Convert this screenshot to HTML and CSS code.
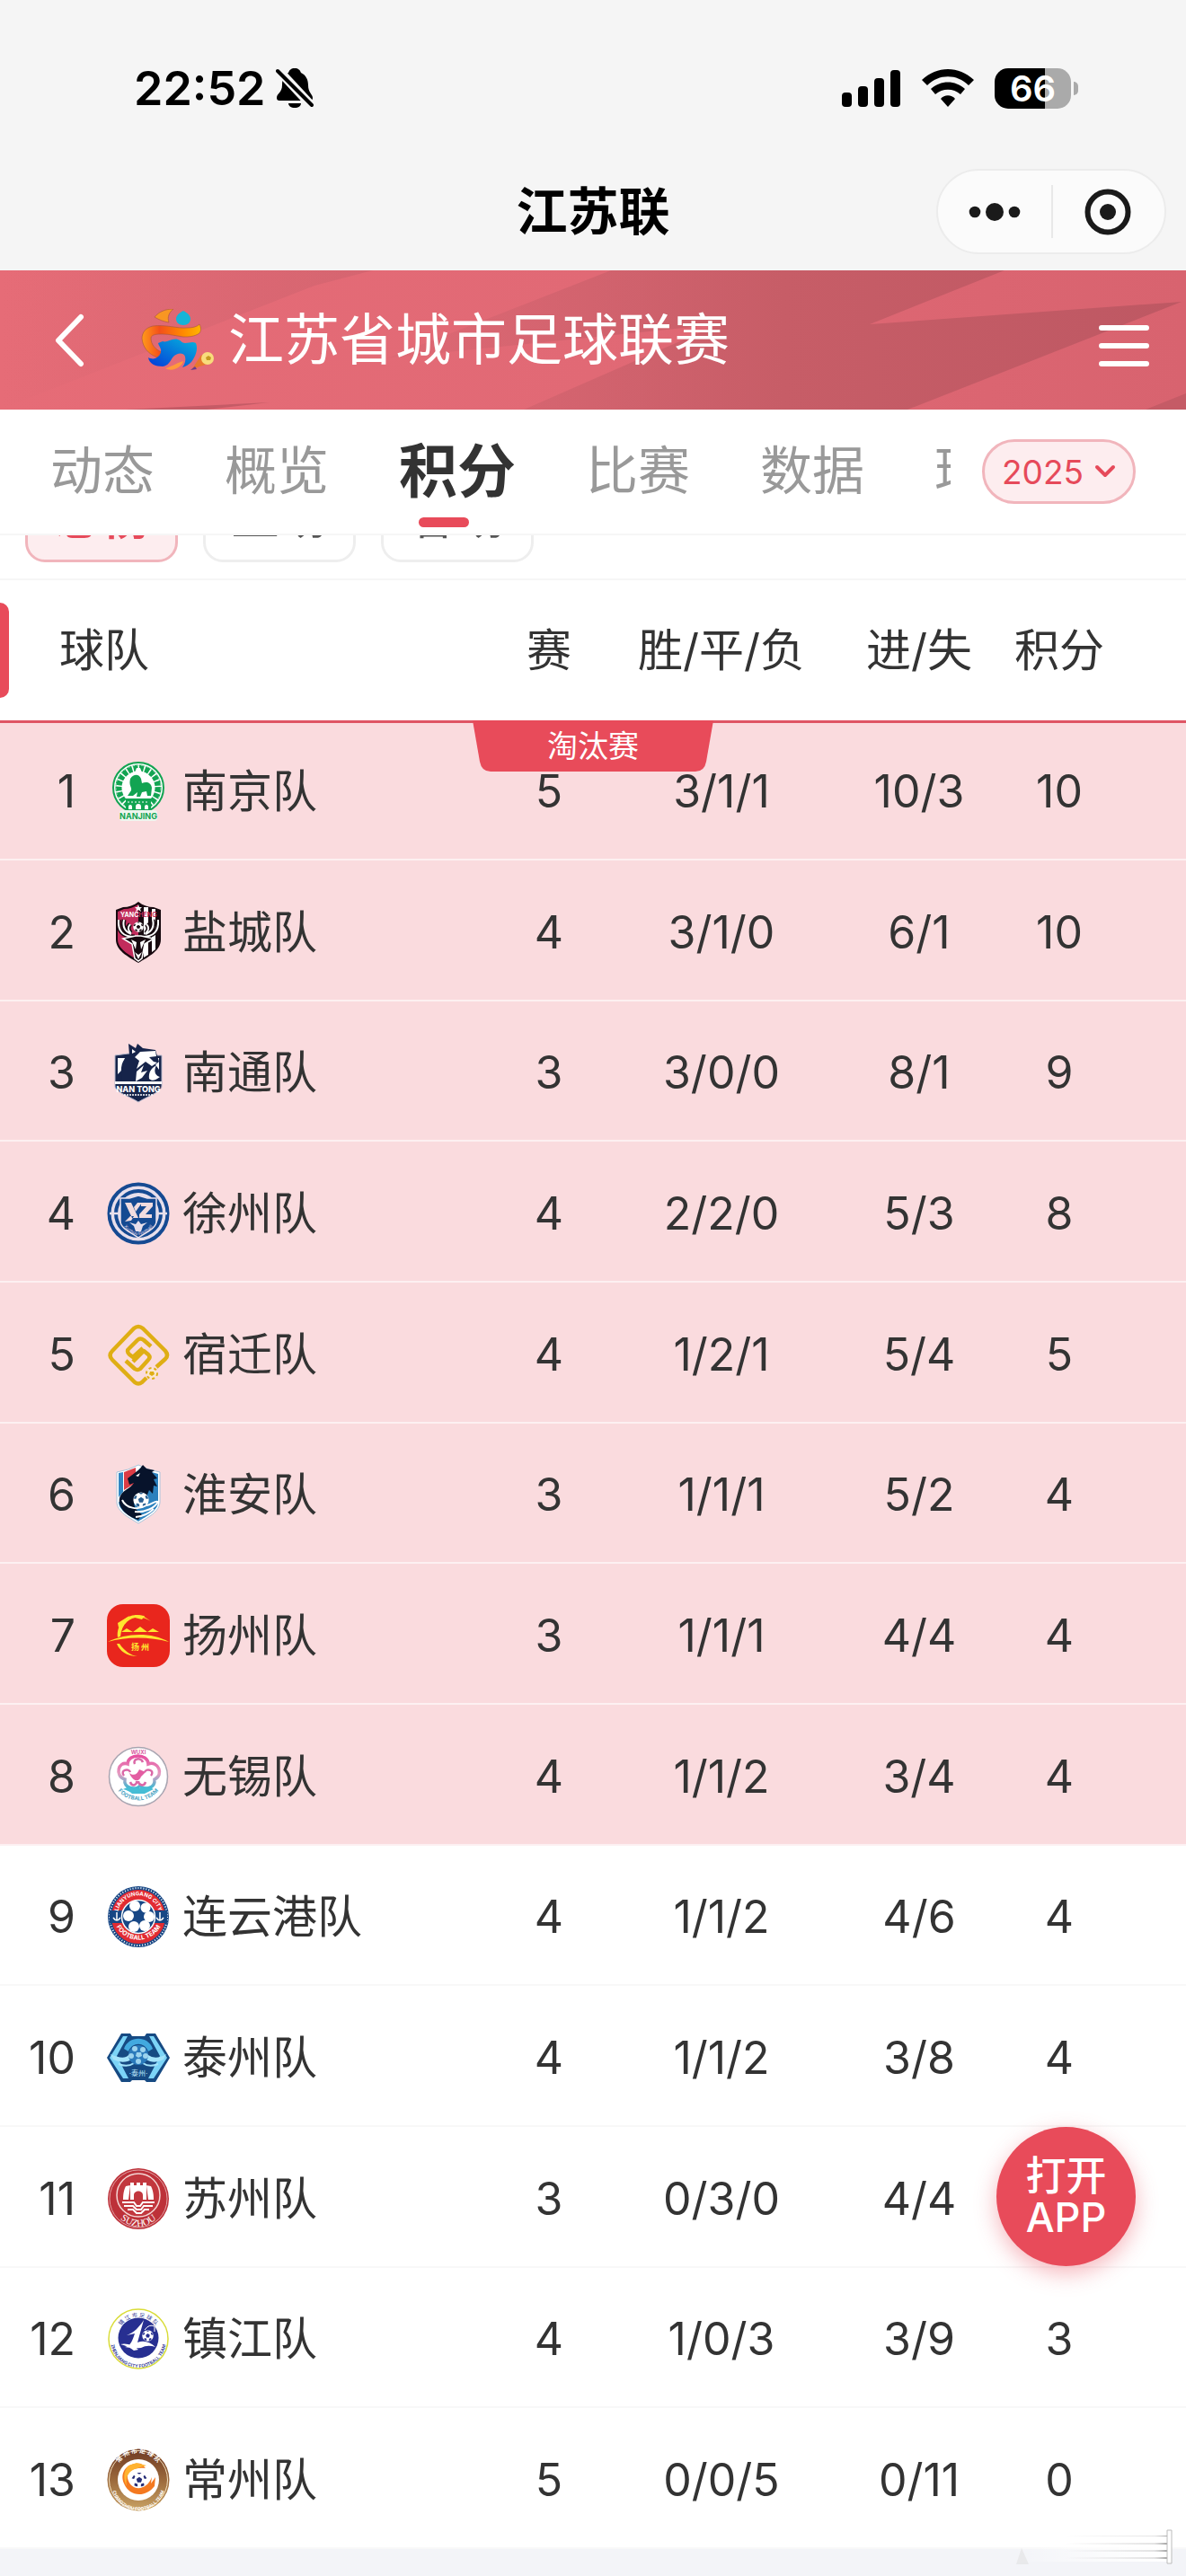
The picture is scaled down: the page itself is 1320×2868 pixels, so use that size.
FILE: index.html
```html
<!DOCTYPE html>
<html lang="zh-CN">
<head>
<meta charset="utf-8">
<meta name="viewport" content="width=device-width, initial-scale=1">
<title>江苏联</title>
<link rel="stylesheet" href="styles.css">
</head>
<body>
<svg class="defs" width="0" height="0" aria-hidden="true">
  <symbol id="ball" viewBox="0 0 24 24">
    <circle cx="12" cy="12" r="11.500" fill="#fff"/>
    <path d="M12 7.500l4.300 3.100-1.600 5h-5.400l-1.600-5zM8.500 1.200l3.500 2.300 3.500-2.300zM.8 9.500l3.400 1.200 1.800-4.200-2-1.500zM23.200 9.500l-3.400 1.200L18 6.500l2-1.500zM4.600 20.400l.6-3.900 4.200 1.500.2 3.500-2 .2zM19.400 20.400l-.6-3.900-4.200 1.500-.2 3.500 2 .2z" fill="currentColor"/>
  </symbol>
</svg>

<div class="status">
  <div class="status-time">
    <span>22:52</span>
    <svg width="42" height="46" viewBox="0 0 42 46" aria-label="静音">
      <path d="M21 1c4 0 6 2 7 5 6 3 8 8 8 14 0 8 5 10 5 14 0 2-1 3-3 3H4c-2 0-3-1-3-3 0-5 6-6 6-14 0-7 2-12 7-14 1-3 3-5 7-5z"/>
      <path d="M14 40h14c0 3-3 5-7 5s-7-2-7-5z"/>
      <path d="M0 0l41 44" stroke="#f5f5f5" stroke-width="10"/>
      <path d="M2 4l38 38" stroke="#000" stroke-width="4" stroke-linecap="round"/>
    </svg>
  </div>
  <div class="status-icons">
    <svg width="66" height="42" viewBox="0 0 66 42" aria-label="信号">
      <rect x="0" y="26" width="11" height="16" rx="4"/><rect x="18" y="19" width="11" height="23" rx="4"/><rect x="36" y="10" width="11" height="32" rx="4"/><rect x="54" y="1" width="11" height="41" rx="4"/>
    </svg>
    <svg width="58" height="42" viewBox="0 0 58 42" aria-label="无线网络">
      <path d="M29 42l-8-9c4-5 12-5 16 0zM10 22c11-10 27-10 38 0l-5 6c-8-7-20-7-28 0zM0 12C17-4 41-4 58 12l-6 6C39 5 19 5 6 18z"/>
    </svg>
    <div class="battery"><span>66</span></div>
  </div>
</div>

<div class="nav">
  <h1>江苏联</h1>
  <div class="capsule">
    <button type="button" aria-label="更多"><svg width="58" height="22" viewBox="0 0 58 22"><circle cx="7" cy="11" r="6.300"/><circle cx="29" cy="11" r="10"/><circle cx="51" cy="11" r="6.300"/></svg></button>
    <button type="button" aria-label="关闭"><svg width="54" height="54" viewBox="0 0 54 54"><circle cx="27" cy="27" r="22.500" fill="none" stroke="#1a1a1a" stroke-width="6"/><circle cx="27" cy="27" r="9"/></svg></button>
  </div>
</div>

<header class="banner">
  <svg class="facets" viewBox="0 0 1320 155" preserveAspectRatio="none" aria-hidden="true">
    <defs>
      <linearGradient id="f1"><stop offset="0" stop-color="#c8606b" stop-opacity="0"/><stop offset="1" stop-color="#c8606b" stop-opacity=".5"/></linearGradient>
      <linearGradient id="f2"><stop offset="0" stop-color="#c8606b" stop-opacity=".15"/><stop offset=".5" stop-color="#c75d67"/><stop offset="1" stop-color="#be5863"/></linearGradient>
    </defs>
    <path d="M0 0H415L350 17 0 155z" fill="url(#f1)"/>
    <path d="M680 0H1118L968 60 1315 35 1010 155H583L800 60 430 98z" fill="url(#f2)"/>
    <path d="M230 155L300 147 140 155zM1275 155l45-18v18z" fill="#c55b66"/>
  </svg>
  <a class="back" href="#" aria-label="返回"><svg width="34" height="60" viewBox="0 0 34 60"><path d="M30 4L5 30l25 26" fill="none" stroke="#fff" stroke-width="6" stroke-linecap="round" stroke-linejoin="round"/></svg></a>
  <svg class="mascot" width="84" height="70" viewBox="0 0 84 70" aria-hidden="true">
    <defs>
      <linearGradient id="m1"><stop offset="0" stop-color="#ff9a1a"/><stop offset=".3" stop-color="#f4501a"/><stop offset=".7" stop-color="#ff8a00"/><stop offset="1" stop-color="#ffb600"/></linearGradient>
      <linearGradient id="m2" x1="1" y1="0" x2="0" y2="1"><stop offset="0" stop-color="#06b4dc"/><stop offset="1" stop-color="#0538d8"/></linearGradient>
    </defs>
    <path d="M16 9C21 3 28 0 37 0c-5 4-7 9-5 15-6-1-11-3-16-6z" fill="#f99622" stroke="#a5553c" stroke-width=".6"/>
    <path d="M48 2c4 2 8 5 8 9s-3 7-8 7-8-3-8-7 4-7 8-9z" fill="#14b4d8"/>
    <path d="M66 17c2 4 2 7 0 10-6 4-12 4-18 4-8-1-15-3-23-3-6 0-12 0-13 4 0 8 5 13 12 16l-5 6C9 50 3 43 2 33c0-7 4-12 12-14 15-2 27 3 38 2 6 0 11-1 14-4z" fill="url(#m1)" stroke="#a5553c" stroke-width=".6"/>
    <path d="M25 36c5 2 10-4 17-2 4 1 4 4 8 4 5 0 8-2 12 0 3 7-1 16-5 21-3 3-6 5-10 6 3-4 4-8 3-12-2-5-9-4-13 0-4 5-5 10-12 11-8 0-15-3-16-10 7 4 13-1 14-6 1-4-2-6-3-10z" fill="url(#m2)"/>
    <path d="M28 66c6-1 12-6 20-8-1 6-12 13-20 8z" fill="#ff9a3c"/>
    <path d="M57 68l11-17 12 9-14 4z" fill="#e8782c"/><path d="M56 68l5-4 2 3z" fill="#6a3a8c"/>
    <circle cx="75" cy="55" r="7" fill="#f8dc7c"/><path d="M73 54l3-2 3 2-1 3h-4z" fill="#c69a22"/>
  </svg>
  <h2>江苏省城市足球联赛</h2>
  <button class="menu" type="button" aria-label="菜单"><svg width="56" height="48" viewBox="0 0 56 48"><path d="M3 4h50M3 24h50M3 44h50" stroke="#fff" stroke-width="6" stroke-linecap="round"/></svg></button>
</header>

<div class="tabbar">
  <nav class="tabs">
    <a href="#">动态</a><a href="#">概览</a><a href="#" class="active" aria-current="page">积分</a><a href="#">比赛</a><a href="#">数据</a><a href="#">球队</a>
  </nav>
  <button class="season" type="button">2025<svg width="24" height="16" viewBox="0 0 24 16"><path d="M3 3l9 9 9-9" fill="none" stroke="#e64a5a" stroke-width="4" stroke-linecap="round" stroke-linejoin="round"/></svg></button>
</div>

<div class="filters">
  <button class="chip selected" type="button">总榜</button>
  <button class="chip" type="button">主场</button>
  <button class="chip" type="button">客场</button>
</div>

<main class="standings">
  <div class="ribbon"><svg viewBox="0 0 268 57" preserveAspectRatio="none" aria-hidden="true"><path d="M0 0H268L260 46Q258 57 248 57H20Q10 57 8 46z" fill="#e84b5a"/></svg><span>淘汰赛</span></div>
  <table>
    <colgroup><col class="c-rank"><col><col class="c-played"><col class="c-record"><col class="c-goals"><col class="c-points"></colgroup>
    <thead>
      <tr><th colspan="2" class="th-team">球队</th><th>赛</th><th>胜/平/负</th><th>进/失</th><th class="pts">积分</th></tr>
    </thead>
    <tbody>
      <tr class="q"><td class="rank">1</td><td><div class="team">
        <svg class="crest" viewBox="0 0 72 72" aria-hidden="true">
          <ellipse cx="36" cy="32" rx="28" ry="28" fill="#fff" stroke="#12a452" stroke-width="2"/>
          <circle cx="36" cy="32" r="22" fill="none" stroke="#12a452" stroke-width="7" stroke-dasharray="5 1.500"/>
          <circle cx="36" cy="32" r="25" fill="none" stroke="#8fd6ae" stroke-width="1" stroke-dasharray="3 2"/>
          <path d="M34 10h4l2 5h-8z" fill="#fff"/>
          <circle cx="36" cy="31" r="17" fill="#fff"/>
          <path d="M27 22c4-6 10-5 12 0l1 5c5-2 10-1 11 5l-1 9h-4l-1-5-5 1-2 5h-4l1-5-5 4h-6l4-6c1-4-3-5-1-13z" fill="#12a452"/>
          <path d="M22 44h28v13H22z" fill="#12a452"/><path d="M25 56v-3a2 2 0 0 1 4 0v3zm8 0v-3a3 3 0 0 1 6 0v3zm10 0v-3a2 2 0 0 1 4 0v3z" fill="#fff"/>
          <path d="M24 48h24" stroke="#fff" stroke-dasharray="2 2"/>
          <rect x="15" y="57" width="42" height="12" rx="3" fill="#eef5ee"/>
          <text x="36" y="67" font-size="9" font-weight="700" text-anchor="middle" fill="#12a452">NANJING</text>
        </svg>南京队</div></td><td>5</td><td>3/1/1</td><td>10/3</td><td class="pts">10</td></tr>

      <tr class="q"><td class="rank">2</td><td><div class="team">
        <svg class="crest" viewBox="0 0 72 72" aria-hidden="true">
          <path d="M11 11l8-3c6 0 12-2 17-6 5 4 11 6 17 6l8 3v33c0 12-13 19-25 26C24 63 11 56 11 44z" fill="#17090f"/>
          <path d="M13 13l7-3c6 0 11-2 16-5v62C25 61 13 54 13 44z" fill="#c22c5c"/>
          <path d="M42 8h5v53l-5 3zM51 10h4v45l-4 3z" fill="#fff"/>
          <path d="M36 5l1 3h3l-2 2 1 3-3-2-3 2 1-3-2-2h3z" fill="#fff"/>
          <text x="16" y="19" font-size="7" font-weight="700" fill="#fff">YANC<tspan fill="#c22c5c">HENG</tspan></text>
          <path d="M14 22c-1 13 5 19 18 19M20 22c-2 8 1 13 8 16M27 27c-3 3-3 7 1 10M58 22c1 13-5 19-18 19M52 22c2 8-1 13-8 16M45 27c3 3 3 7-1 10" fill="none" stroke="#17090f" stroke-width="5"/>
          <path d="M14 22c-1 13 5 19 18 19M20 22c-2 8 1 13 8 16M27 27c-3 3-3 7 1 10M58 22c1 13-5 19-18 19M52 22c2 8-1 13-8 16M45 27c3 3 3 7-1 10" fill="none" stroke="#fff" stroke-width="2"/>
          <use href="#ball" x="30" y="24" width="12" height="12" color="#17090f"/>
          <path d="M19 43l14-3h6l14 3-10 6-3 16-4 3-4-3-3-16z" fill="#17090f" stroke="#fff" stroke-width="1.500"/>
          <path d="M28 44l6 3-1 8zM44 44l-6 3 1 8zM32 58l4 3 4-3-4 8z" fill="#fff"/>
        </svg>盐城队</div></td><td>4</td><td>3/1/0</td><td>6/1</td><td class="pts">10</td></tr>

      <tr class="q"><td class="rank">3</td><td><div class="team">
        <svg class="crest" viewBox="0 0 72 72" aria-hidden="true">
          <path d="M10 17l15-2 22 2 15 0v34c0 7-17 12-26 18C27 63 10 58 10 51z" fill="#16244a" stroke="#b5b8cc"/>
          <path d="M13 20h8l-4 14-4 4zM59 20h-9l9 13z" fill="#fff"/>
          <path d="M18 45C15 29 18 21 26 17L25 4l8 5 2-5 6 5 14 2 4 13-8 7-8-4c-7 3-7 9-4 18z" fill="#16244a"/>
          <path d="M29 10l4 3-4 2zM38 13l17-1 1 6-8 1 5 5 4 1-6 4-7-5-10 8 3-9-5-4z" fill="#fff"/>
          <path d="M34 35l8-7-3 8 7-2-6 8-7 4zM48 43c-1-8 3-12 8-15-4 8 0 12 4 13-5 4-9 5-12 2z" fill="#fff"/>
          <path d="M10 46h52v3H10z" fill="#fff"/>
          <text x="36" y="58" font-size="9" font-weight="800" text-anchor="middle" fill="#fff">NAN TONG</text>
          <path d="M20 61h32" stroke="#fff" stroke-width="1.500" stroke-dasharray="2 1"/>
        </svg>南通队</div></td><td>3</td><td>3/0/0</td><td>8/1</td><td class="pts">9</td></tr>

      <tr class="q"><td class="rank">4</td><td><div class="team">
        <svg class="crest" viewBox="0 0 72 72" aria-hidden="true">
          <circle cx="36" cy="36" r="32.500" fill="#e8dfeb" stroke="#154a92" stroke-width="4"/>
          <circle cx="36" cy="36" r="25" fill="none" stroke="#154a92" stroke-width="4"/>
          <path d="M4 36h14M54 36h14" stroke="#e8dfeb" stroke-width="2.500"/>
          <path d="M16 19h10l10-3 10 3h10v26c0 7-11 12-20 18-9-6-20-11-20-18z" fill="#154a92" stroke="#e8dfeb" stroke-width="1.500"/>
          <path d="M21 24h7l8 17h-7zM31 29l4-5h5l-7 10zM27 39l-6 6 7-1 3-5zM39 24h13v4l-8 9h7v4H37v-4l8-9h-6z" fill="#f1dcdf"/>
          <path d="M36 44l3 4 7-2-5 4-2 6h-6l-2-6-5-4 7 2z" fill="#e8dfeb"/>
          <path id="xzp" d="M15 44Q36 76 57 44" fill="none"/>
          <text font-size="5" fill="#e8dfeb"><textPath href="#xzp" startOffset="50%" text-anchor="middle">Xuzhou Football</textPath></text>
        </svg>徐州队</div></td><td>4</td><td>2/2/0</td><td>5/3</td><td class="pts">8</td></tr>

      <tr class="q"><td class="rank">5</td><td><div class="team">
        <svg class="crest" viewBox="0 0 72 72" aria-hidden="true">
          <g fill="none" stroke="#dfae14" stroke-width="4.500" stroke-linejoin="round">
            <path d="M45 62l-5 5q-4 3-8 0L7 42q-5-5 0-10L31 7q5-4 10 0l25 25q4 5 0 9L56 50"/>
            <path d="M50 27l-8-7q-4-3-7 0L26 29q-4 3 0 7l4 3 11-10M22 43l10 9q3 2 6 0l9-10q3-3 0-6l-5-4-12 12"/>
          </g>
          <circle cx="51" cy="57" r="6" fill="#fbe7cf" stroke="#dfae14" stroke-width="2" stroke-dasharray="3 3"/><path d="M49 55h4l1 3-3 2-3-2z" fill="#dfae14"/>
        </svg>宿迁队</div></td><td>4</td><td>1/2/1</td><td>5/4</td><td class="pts">5</td></tr>

      <tr class="q"><td class="rank">6</td><td><div class="team">
        <svg class="crest" viewBox="0 0 72 72" aria-hidden="true">
          <path d="M12 11q13-2 24-8 11 6 24 8v33c0 11-14 18-24 24C26 62 12 55 12 44z" fill="#fff" stroke="#a9c4da"/>
          <path d="M14 12l5-1v22l-5 6z" fill="#3287c3"/><path d="M20 11l13-5v17L20 31z" fill="#dc3b45"/>
          <path d="M37 7l21 6v31c0 10-13 16-22 22-9-6-22-12-22-22l12 4z" fill="#2a80bd"/>
          <path d="M24 18L37 8l4-5 4 4 9 2-3 2 6 7-4 1 4 8-4-1-1 9-4-4-4 10-8-5c-6 5-8 14 4 22l-4 6C22 60 13 50 15 40c2-9 13-11 16-17l-5 2z" fill="#07132b"/>
          <path d="M33 15l5-3-2 4z" fill="#fff"/>
          <use href="#ball" x="30" y="33" width="18" height="18" color="#2a5f91"/>
          <path d="M18 42c4 9 17 12 27 6 6-1 10-6 13-4-4 7-14 12-26 11M33 61c10-1 15-4 20-9" fill="none" stroke="#fff" stroke-width="2"/>
        </svg>淮安队</div></td><td>3</td><td>1/1/1</td><td>5/2</td><td class="pts">4</td></tr>

      <tr class="q"><td class="rank">7</td><td><div class="team">
        <svg class="crest" viewBox="0 0 72 72" aria-hidden="true">
          <rect x="1" y="1" width="70" height="70" rx="18" fill="#e9261d"/>
          <path d="M13 38C11 22 25 9 41 14l9 6C36 11 18 16 16 37zM15 45c6 9 13 13 20 14-12 0-20-6-23-14z" fill="#ffe52f"/>
          <path d="M13 22l13-8-4 8-8 5zM32 13l11 1-3 4-8-2z" fill="#ffe52f"/>
          <path d="M2 43C23 33 50 32 70 43 49 37 22 37 2 43z" fill="#ffe52f"/>
          <path d="M17 32l6-4 7 4zM30 32l8-6 8 6zM46 32l6-4 7 4z" fill="#ffe52f"/>
          <text x="38" y="52" font-size="9" font-weight="700" text-anchor="middle" fill="#ffe52f">扬 州</text>
        </svg>扬州队</div></td><td>3</td><td>1/1/1</td><td>4/4</td><td class="pts">4</td></tr>

      <tr class="q"><td class="rank">8</td><td><div class="team">
        <svg class="crest" viewBox="0 0 72 72" aria-hidden="true">
          <defs><linearGradient id="wx" x1="0" y1="0" x2="0" y2="1"><stop offset="0" stop-color="#e64fa0"/><stop offset=".55" stop-color="#e69bc0"/><stop offset="1" stop-color="#3ab9d3"/></linearGradient></defs>
          <circle cx="36" cy="36" r="32.500" fill="#fff" stroke="#a8a5b1" stroke-width="1.500"/>
          <path d="M24 22c0-12 23-12 23 0 11-4 18 12 7 17 1 10-11 13-16 7-5 6-19 3-17-7-12-4-7-21 3-17z" fill="none" stroke="url(#wx)" stroke-width="3.500"/>
          <path d="M32 22c-3-6 7-8 9-2M20 35c-5-6 5-9 7-4M50 35c5-6-5-9-7-4M27 42c2 6 8 3 7-1M44 42c-2 6-8 3-8-1" fill="none" stroke="#db67a7" stroke-width="2.500"/>
          <path d="M26 32c5 4 9 1 11-4l7 3-5 5c-3 8-10 4-13-4z" fill="#e35da2"/>
          <path d="M19 50q8-5 17-1 9-4 17 1-8 4-10 5H29q-3-3-10-5z" fill="#45bdd5"/>
          <path id="wxb" d="M9 44a29 29 0 0 0 54 0" fill="none"/>
          <text x="36" y="11" font-size="6" font-weight="700" text-anchor="middle" fill="#d95c9f">WUXI</text>
          <text font-size="6" font-weight="700" fill="#4aa3c3"><textPath href="#wxb" startOffset="50%" text-anchor="middle">FOOTBALL TEAM</textPath></text>
        </svg>无锡队</div></td><td>4</td><td>1/1/2</td><td>3/4</td><td class="pts">4</td></tr>

      <tr><td class="rank">9</td><td><div class="team">
        <svg class="crest" viewBox="0 0 72 72" aria-hidden="true">
          <circle cx="36" cy="36" r="34" fill="#174785"/><circle cx="36" cy="36" r="32" fill="none" stroke="#fff" stroke-width="2" stroke-dasharray="1 2"/>
          <circle cx="36" cy="36" r="24.500" fill="none" stroke="#e22b32" stroke-width="11"/>
          <path d="M4 29h15v14H4zM53 29h15v14H53z" fill="#174785"/>
          <circle cx="36" cy="36" r="18.500" fill="#174785" stroke="#fff" stroke-width="1.500"/>
          <g fill="#fff"><circle cx="32" cy="24" r="6"/><circle cx="44" cy="26" r="5.500"/><circle cx="25" cy="35" r="6"/><circle cx="31" cy="47" r="6"/><circle cx="43" cy="46" r="6"/><circle cx="48" cy="36" r="6"/></g>
          <path d="M12 31v9M8 37q4 6 8 0M60 31v9M56 37q4 6 8 0" fill="none" stroke="#fff" stroke-width="1.500"/>
          <path id="lyt" d="M13 31a23.500 23.500 0 0 1 46 0" fill="none"/><path id="lyb" d="M10 44a28 28 0 0 0 52 0" fill="none"/>
          <text font-size="6" font-weight="700" fill="#fff"><textPath href="#lyt" startOffset="50%" text-anchor="middle">LIANYUNGANG CITY</textPath></text>
          <text font-size="7" font-weight="700" fill="#fff"><textPath href="#lyb" startOffset="50%" text-anchor="middle">FOOTBALL TEAM</textPath></text>
        </svg>连云港队</div></td><td>4</td><td>1/1/2</td><td>4/6</td><td class="pts">4</td></tr>

      <tr><td class="rank">10</td><td><div class="team">
        <svg class="crest" viewBox="0 0 72 72" aria-hidden="true">
          <path d="M1 36L17 9h10l2 3h14l2-3h10l16 27-16 27H45l-2-2H29l-2 2H17z" fill="#164a83"/>
          <path d="M4 36L19 12h5L12 34l13 25h-6zM68 36L53 12h-5l12 22-13 25h6z" fill="#7cd4f7"/>
          <path d="M20 26c5-15 27-15 32 0l-5 3c-4-11-18-11-22 0z" fill="#42a9df"/>
          <path d="M5 32q15 7 20 1 11-6 22 0 8 6 20-1l-3 6q-8 4-15 2-12-7-25 0-8 2-16-2z" fill="#a4e3fa"/>
          <path d="M14 43q10 4 17-1M58 43q-10 4-17-1" fill="none" stroke="#a4e3fa" stroke-width="2"/>
          <circle cx="36" cy="33" r="11" fill="#2b7abb"/><g fill="#9cd3ee"><circle cx="32" cy="26" r="3"/><circle cx="41" cy="27" r="3"/><circle cx="28" cy="34" r="3"/><circle cx="44" cy="34" r="3"/><circle cx="36" cy="40" r="3"/><path d="M34 30h5l1 4-4 2-3-2z"/></g>
          <text x="36" y="56" font-size="8" text-anchor="middle" fill="#bdeaff">·泰州·</text>
        </svg>泰州队</div></td><td>4</td><td>1/1/2</td><td>3/8</td><td class="pts">4</td></tr>

      <tr><td class="rank">11</td><td><div class="team">
        <svg class="crest" viewBox="0 0 72 72" aria-hidden="true">
          <circle cx="36" cy="36" r="34" fill="#bd3139"/><circle cx="36" cy="36" r="32" fill="none" stroke="#e2a2a5" stroke-width="1"/>
          <circle cx="36" cy="32" r="24" fill="#c2373e" stroke="#f4d5d3" stroke-width="1.500"/>
          <path d="M19 37c0-7 1-11 3-15l5-1-2 16zM27 37V18h4v3h3v-3h4v3h3v-3h4v19h-4v-5c0-6-10-6-10 0v5zM47 37l-2-16 5 1c2 4 3 8 3 15z" fill="#fff"/>
          <path d="M18 40h13l3 4h4l3-4h13M20 44h10l4 4h5l3-4h10M24 48h6l4 4h5l4-4h5" fill="none" stroke="#fff" stroke-width="2"/>
          <path id="szb" d="M13 56Q36 78 59 56" fill="none"/>
          <text class="serif" font-size="11" fill="#fff"><textPath href="#szb" startOffset="50%" text-anchor="middle">SUZHOU</textPath></text>
        </svg>苏州队</div></td><td>3</td><td>0/3/0</td><td>4/4</td><td class="pts"></td></tr>

      <tr><td class="rank">12</td><td><div class="team">
        <svg class="crest" viewBox="0 0 72 72" aria-hidden="true">
          <circle cx="36" cy="36" r="33" fill="#fff" stroke="#d9dc38" stroke-width="1.500"/>
          <circle cx="36" cy="35" r="22.500" fill="#272f91"/>
          <path d="M23 32c8-3 14-9 19-17l-7 25q10-4 20 5-9-3-16 1-9 1-18-1c6-1 8-6 11-15zM16 42q11-2 20 6l-5 1q-6-5-15-7z" fill="#fff"/>
          <use href="#ball" x="40" y="26" width="13" height="13" color="#272f91"/><path d="M43 26q5-7 11-4v6" fill="none" stroke="#fff"/>
          <path id="zjt" d="M14 26a24 24 0 0 1 44 0" fill="none"/><path id="zjb" d="M5 37a31 31 0 0 0 62 0" fill="none"/>
          <text font-size="6" fill="#272f91"><textPath href="#zjt" startOffset="50%" text-anchor="middle">镇 江 市 足 球 队</textPath></text>
          <text font-size="5" font-weight="600" fill="#272f91"><textPath href="#zjb" startOffset="50%" text-anchor="middle">ZHENJIANG CITY FOOTBALL TEAM</textPath></text>
        </svg>镇江队</div></td><td>4</td><td>1/0/3</td><td>3/9</td><td class="pts">3</td></tr>

      <tr><td class="rank">13</td><td><div class="team">
        <svg class="crest" viewBox="0 0 72 72" aria-hidden="true">
          <defs><linearGradient id="cz" x1="0" y1="0" x2="0" y2="1"><stop offset="0" stop-color="#6f3a23"/><stop offset=".5" stop-color="#9b693c"/><stop offset="1" stop-color="#c9a365"/></linearGradient></defs>
          <circle cx="36" cy="36" r="34.500" fill="url(#cz)"/><circle cx="36" cy="36" r="32.500" fill="none" stroke="#f4e1bf"/><circle cx="36" cy="36" r="23" fill="#fff"/>
          <path d="M39 18c-17-2-24 11-19 22 6 15 24 16 34 3l1-10-5 7 1-7C45 49 27 49 24 34c-1-9 8-12 20-11z" fill="#f47920"/>
          <path d="M25 20l9-3 11 3-10 3c-9 2-14 9-12 20-4-8-4-16 2-23z" fill="#ffb331"/>
          <use href="#ball" x="28" y="27" width="18" height="18" color="#252c75"/>
          <path id="czt" d="M10 32a26 26 0 0 1 52 0" fill="none"/><path id="czb" d="M6 40a30 30 0 0 0 60 0" fill="none"/>
          <text font-size="7" font-weight="700" fill="#fff"><textPath href="#czt" startOffset="50%" text-anchor="middle">常 州 市 足 球 队</textPath></text>
          <text font-size="5" font-weight="700" fill="#fff"><textPath href="#czb" startOffset="50%" text-anchor="middle">CHANGZHOU FOOTBALL TEAM</textPath></text>
        </svg>常州队</div></td><td>5</td><td>0/0/5</td><td>0/11</td><td class="pts">0</td></tr>
    </tbody>
  </table>
  <button class="open-app" type="button">打开<br>APP</button>
</main>

<footer class="foot">
  <svg class="smudge" width="180" height="44" viewBox="0 0 180 44" aria-hidden="true">
    <defs>
      <linearGradient id="s1"><stop offset="0" stop-color="#fff" stop-opacity="0"/><stop offset=".7" stop-color="#fff" stop-opacity=".8"/><stop offset="1" stop-color="#fff"/></linearGradient>
      <linearGradient id="s2"><stop offset=".2" stop-color="#bbb" stop-opacity="0"/><stop offset=".9" stop-color="#bbb" stop-opacity=".4"/><stop offset="1" stop-color="#999" stop-opacity=".9"/></linearGradient>
    </defs>
    <path d="M0 4h172v34H0z" fill="url(#s1)"/>
    <path d="M30 9h142v1H30zM50 17h122v2H50zM50 25h122v2H50zM40 33h132v2H40z" fill="url(#s2)"/>
    <path d="M4 41l6-18 8 18z" fill="#ddd" opacity=".5"/>
    <path d="M172 3h5v37h-5z" fill="#fff" stroke="#bbb"/>
  </svg>
</footer>
</body>
</html>
```
FILE: styles.css
```css
* { box-sizing: border-box; }

body {
  margin: 0;
  background: #fff;
  color: #333;
  font-family: Inter, "Noto Sans CJK SC", sans-serif;
}

button {
  margin: 0;
  padding: 0;
  border: 0;
  background: none;
  color: inherit;
  font: inherit;
}

a { color: inherit; text-decoration: none; }

h1, h2 { margin: 0; }

svg { display: block; flex: none; }

.defs { position: absolute; }

.serif { font-family: "Liberation Serif", serif; }

/* Phone status bar */
.status {
  display: flex;
  align-items: center;
  justify-content: space-between;
  height: 170px;
  padding: 26px 120px 0 149px;
  background: #f5f5f5;
  color: #000;
}

.status-time {
  display: flex;
  align-items: center;
  gap: 12px;
  font-size: 52px;
  font-weight: 600;
}

.status-icons { display: flex; align-items: center; gap: 23px; }

.battery {
  position: relative;
  width: 85px;
  height: 45px;
  margin-right: 8px;
  border-radius: 15px;
  background: linear-gradient(90deg, #000 66%, #aaa 66%);
  color: #fff;
  font-size: 40px;
  font-weight: 600;
  line-height: 45px;
  text-align: center;
}

.battery::after {
  content: "";
  position: absolute;
  top: 15px;
  right: -8px;
  width: 5px;
  height: 15px;
  border-radius: 0 5px 5px 0;
  background: #aaa;
}

/* Mini-program title bar */
.nav {
  display: grid;
  grid-template-columns: 1fr auto 1fr;
  align-items: center;
  height: 131px;
  padding: 0 22px;
  background: #f5f5f5;
  color: #000;
}

.nav h1 {
  grid-column: 2;
  font-size: 57px;
  font-weight: 600;
  line-height: 80px;
}

.capsule {
  display: flex;
  justify-self: end;
  width: 256px;
  height: 95px;
  border: 2px solid #ececec;
  border-radius: 48px;
  background: #fbfbfb;
  fill: #1a1a1a;
}

.capsule button {
  display: flex;
  flex: 1;
  align-items: center;
  justify-content: center;
}

.capsule button + button { position: relative; }

.capsule button + button::before {
  content: "";
  position: absolute;
  top: 16px;
  bottom: 16px;
  left: 0;
  width: 2px;
  background: #e8e8e8;
}

/* League banner */
.banner {
  position: relative;
  display: flex;
  align-items: center;
  height: 155px;
  padding: 0 41px 0 60px;
  background: linear-gradient(90deg, #e66c77, #e16975 50%, #d8636f);
  color: #fff;
}

.banner > * { position: relative; }

.banner .facets {
  position: absolute;
  inset: 0;
  width: 100%;
  height: 100%;
}

.mascot { margin: 0 14px 0 62px; }

.banner h2 {
  flex: 1;
  font-size: 62px;
  font-weight: 400;
  line-height: 80px;
}

.menu { margin-top: 12px; }

/* Section tabs */
.tabbar {
  display: flex;
  align-items: center;
  height: 140px;
  padding-right: 56px;
  border-bottom: 2px solid #f6f6f6;
}

.tabs {
  display: flex;
  flex: 1;
  gap: 78px;
  align-items: center;
  height: 100%;
  min-width: 0;
  margin-right: 35px;
  padding: 0 0 10px 56px;
  overflow: hidden;
  color: #999;
  font-size: 58px;
  white-space: nowrap;
}

.tabs .active {
  position: relative;
  color: #333;
  font-size: 65px;
  font-weight: 700;
}

.tabs .active::after {
  content: "";
  position: absolute;
  bottom: -20px;
  left: 22px;
  width: 56px;
  height: 11px;
  border-radius: 6px;
  background: #e84b5a;
}

.season {
  display: flex;
  flex: none;
  gap: 12px;
  align-items: center;
  justify-content: center;
  width: 171px;
  height: 72px;
  border: 3px solid #f1b5bc;
  border-radius: 36px;
  background: #fdedef;
  color: #e64a5a;
  font-size: 37px;
}

/* Table filters, scrolled part of the way under the tabs */
.filters {
  display: flex;
  gap: 28px;
  align-items: flex-end;
  height: 50px;
  padding: 0 28px 18px;
  overflow: hidden;
  border-bottom: 2px solid #f6f6f6;
}

.chip {
  flex: none;
  width: 170px;
  height: 100px;
  border: 3px solid #eee;
  border-radius: 22px;
  color: #555;
  font-size: 54px;
  line-height: 88px;
}

.chip.selected {
  border-color: #f1b5bc;
  background: #fdedef;
  color: #e64a5a;
  font-weight: 700;
}

/* Standings */
.standings { position: relative; }

.standings::before {
  content: "";
  position: absolute;
  top: 25px;
  left: 0;
  width: 10px;
  height: 106px;
  border-radius: 0 10px 10px 0;
  background: #e84b5a;
}

table {
  width: 100%;
  border-collapse: separate;
  border-spacing: 0;
  table-layout: fixed;
  font-size: 50px;
  line-height: 70px;
}

.c-rank { width: 84px; }
.c-played { width: 154px; }
.c-record { width: 230px; }
.c-goals { width: 210px; }
.c-points { width: 192px; }

th, td {
  padding: 4px 0 0;
  font-weight: 400;
  text-align: center;
  white-space: nowrap;
}

th { height: 159px; padding: 0; border-bottom: 3px solid #df5564; }
td { height: 157px; border-bottom: 2px solid #f8f8f8; }

tr:nth-child(3n) td { height: 156px; }
tbody tr:first-child td { height: 153px; padding-top: 0; }

.th-team { padding-left: 66px; text-align: left; }
.rank { text-align: right; }
th.pts, td.pts { padding-right: 90px; }

.q td { background: #fadbde; border-bottom-color: #fdf0f1; }

.team { display: flex; align-items: center; padding-left: 34px; }

.crest { width: 72px; height: 72px; margin-right: 13px; }

.ribbon {
  position: absolute;
  top: 156px;
  left: 50%;
  width: 268px;
  height: 57px;
  margin-left: -134px;
  color: #fff;
  font-size: 34px;
  line-height: 57px;
  text-align: center;
}

.ribbon svg { position: absolute; inset: 0; width: 100%; height: 100%; }
.ribbon span { position: relative; }

.open-app {
  position: absolute;
  right: 56px;
  bottom: 315px;
  width: 155px;
  height: 155px;
  border-radius: 50%;
  background: #e84b5a;
  box-shadow: 0 8px 24px rgba(232, 75, 90, .4);
  color: #fff;
  font-size: 45px;
  font-weight: 500;
  line-height: 46px;
}

.foot {
  position: relative;
  height: 30px;
  background: #f3f4f8;
}

.smudge { position: absolute; right: 13px; bottom: 10px; }
```
